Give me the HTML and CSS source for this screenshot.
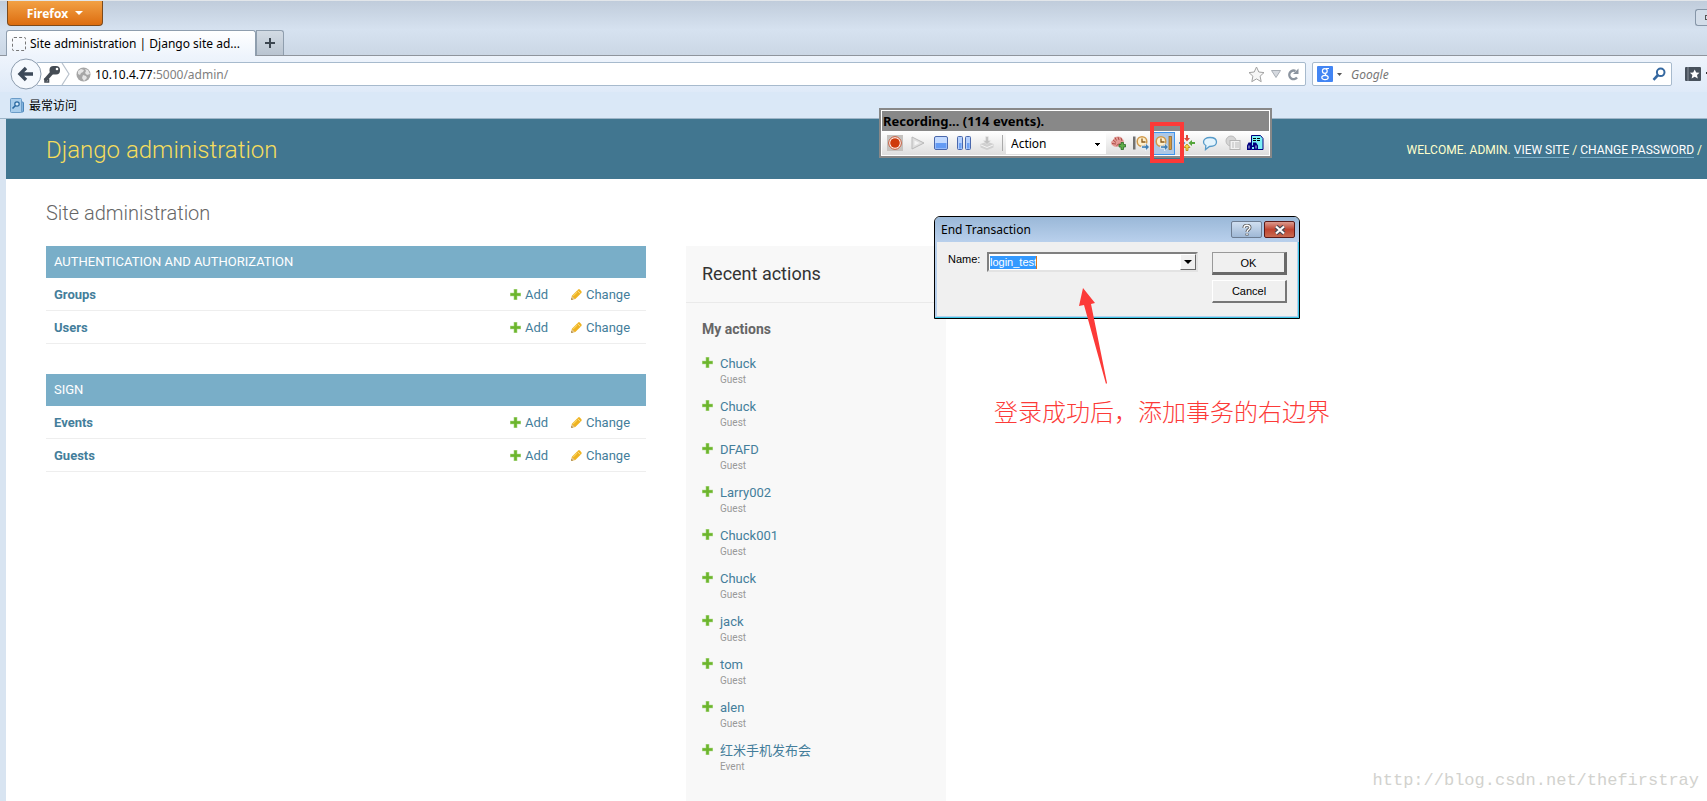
FILE: index.html
```html
<!DOCTYPE html>
<html lang="en">
<head>
<meta charset="utf-8">
<title>Site administration | Django site admin</title>
<link rel="stylesheet" href="styles.css">
</head>
<body>
<svg class="defs" aria-hidden="true">
  <symbol id="plus" viewBox="0 0 12 12"><path d="M4 0h4v4h4v4H8v4H4V8H0V4h4z" fill="#b5dc92"/><path d="M4.600 .6h2.800v4h4v2.800h-4v4H4.600v-4h-4V4.600h4z" fill="#6cb52d"/></symbol>
  <symbol id="pencil" viewBox="0 0 12 12"><path d="M.3 11.700l.7-4.400L7.500.9c.8-.7 1.700-.7 2.400 0l1.200 1.200c.7.7.7 1.600 0 2.400L4.700 11z" fill="#efb320"/><path d="M7 1.700l3.300 3.300" stroke="#f9e3a0" stroke-width="1"/><path d="M2.300 7.500L6.500 3.300" stroke="#f8d463" stroke-width="1.200"/><path d="M.3 11.700l.7-4 3.300 3.300z" fill="#e3c48c"/><path d="M.2 11.800l.4-1.900 1.500 1.500z" fill="#8a6a33"/></symbol>
  <symbol id="clock" viewBox="0 0 14 16"><circle cx="6" cy="6.500" r="4.800" fill="#fff0cc" stroke="#d09a4c" stroke-width="1.500"/><path d="M6 3.500v3.500h3.500" fill="none" stroke="#8a5a1c" stroke-width="1.300"/><path d="M5.500 10.800h4V8l4 4-4 4v-2.700h-4z" fill="#3f7fb5" stroke="#fff" stroke-width=".7"/></symbol>
</svg>

<header class="chrome">
  <div class="titlebar">
    <button class="firefox" type="button">Firefox <span class="caret"></span></button>
    <button class="maximize" type="button" aria-label="Restore window"><span></span></button>
  </div>
  <div class="tabs">
    <button class="tab" type="button"><span class="blank-icon"></span><span>Site administration | Django site ad...</span></button>
    <button class="new-tab" type="button" aria-label="New tab"><svg width="12" height="12" viewBox="0 0 12 12"><path d="M6 1v10M1 6h10" stroke="#3c4650" stroke-width="2"/></svg></button>
  </div>
  <div class="navbar">
    <button class="back" type="button" aria-label="Back"><svg width="32" height="32" viewBox="0 0 32 32"><circle cx="16" cy="16" r="15" fill="#f5f9fe" stroke="#8b9bad"/><path d="M23 16H10.500M16 10l-6 6 6 6" fill="none" stroke="#3d4a5a" stroke-width="3.400"/></svg></button>
    <div class="urlbar">
      <svg class="key" width="33" height="22" viewBox="0 0 33 22"><path d="M8 17.500l7-8" stroke="#454c54" stroke-width="3.600"/><path d="M8 15.500v3.500h3.500v-3" fill="none" stroke="#454c54" stroke-width="1.600"/><rect x="12.500" y="3" width="10.500" height="8.500" rx="4" fill="#454c54"/><circle cx="20" cy="6" r="1.300" fill="#fff"/><path d="M25 0l7 11-7 11" fill="none" stroke="#b9c2cc" stroke-width="1.200"/></svg>
      <svg class="globe" width="15" height="15" viewBox="0 0 15 15"><circle cx="7.500" cy="7.500" r="7" fill="#a6a6a6"/><path d="M2 4l3-2 3 1-1 2-2 1-1 2-2-1zM9 2l3 1 2 4-3 1-2-2 1-2zM7 8l3 1 1 2-3 3-2-3z" fill="#e4e4e4"/></svg>
      <label class="host" for="url">10.10.4.77</label><input id="url" class="path" type="text" value=":5000/admin/">
      <svg class="star" width="17" height="17" viewBox="0 0 17 17"><path d="M8.500 1l2.300 5 5.200.6-3.900 3.600 1.100 5.500-4.700-2.800-4.700 2.800 1.100-5.500L1 6.600 6.200 6z" fill="#f6f6f6" stroke="#a2a2a2"/></svg>
      <svg width="10" height="8" viewBox="0 0 10 8"><path d="M.5.500h9L5 7.500z" fill="#d5d9df" stroke="#a8aeb5"/></svg>
      <button class="bare reload" type="button" aria-label="Reload"><svg width="12" height="13" viewBox="0 0 12 13"><path d="M8.500 3A4.300 4.300 0 1 0 10 9.500" fill="none" stroke="#8b949f" stroke-width="2.400"/><path d="M11.500.500V6H6z" fill="#8b949f"/></svg></button>
    </div>
    <div class="searchbar">
      <svg width="16" height="16" viewBox="0 0 16 16"><rect width="16" height="16" rx="1" fill="#4285f4"/><circle cx="7.800" cy="5" r="2.400" fill="none" stroke="#fff" stroke-width="1.200"/><ellipse cx="8" cy="11.500" rx="3.200" ry="2.200" fill="none" stroke="#fff" stroke-width="1.200"/><path d="M9 2.500h3M8 7.500l1 2" stroke="#fff" stroke-width="1.200"/></svg>
      <svg width="5" height="3" viewBox="0 0 5 3"><path d="M0 0h5L2.500 3z" fill="#555"/></svg>
      <input class="search" type="text" placeholder="Google" aria-label="Search">
      <button class="bare" type="button" aria-label="Go"><svg width="14" height="14" viewBox="0 0 14 14"><circle cx="8.700" cy="5.300" r="3.800" fill="none" stroke="#3568a0" stroke-width="2"/><path d="M6 8l-4.500 4.800" stroke="#3568a0" stroke-width="2.600"/></svg></button>
    </div>
    <button class="bare bookmarks" type="button" aria-label="Bookmarks"><svg width="22" height="14" viewBox="0 0 22 14"><rect width="16" height="14" rx="1" fill="#48515c"/><path d="M3 0v14" stroke="#8b939c"/><path d="M9.700 2.500l1.500 3 3.300.3-2.500 2.200.8 3.400-3.100-1.700-3.100 1.700.8-3.400L4.900 5.800l3.300-.3z" fill="#fff"/><path d="M21 5h1v2h-1z" fill="#333"/></svg></button>
  </div>
  <div class="bookbar">
    <svg width="14" height="15" viewBox="0 0 14 15"><rect x="8" y="4" width="5.500" height="10" rx="1" fill="#7fb2de" stroke="#4d86ba"/><rect x=".5" y=".5" width="11" height="14" rx="1" fill="#a8cdec" stroke="#6b9cc8"/><circle cx="7" cy="6" r="2.200" fill="#d8ebfa" stroke="#27679f" stroke-width="1.200"/><path d="M5.300 7.700L2.500 10.500" stroke="#27679f" stroke-width="1.600"/></svg>
    <a href="#">最常访问</a>
  </div>
</header>

<div class="page">
  <div class="site-header">
    <a class="brand" href="#">Django administration</a>
    <div class="user-tools">WELCOME. ADMIN. <a href="#">VIEW SITE</a> / <a href="#">CHANGE PASSWORD</a> /</div>
  </div>
  <main>
    <h1>Site administration</h1>
    <div class="columns">
      <div class="apps">
        <table>
          <caption>AUTHENTICATION AND AUTHORIZATION</caption>
          <tbody>
          <tr><th scope="row"><a href="#">Groups</a></th><td class="add"><a href="#"><svg><use href="#plus"/></svg>Add</a></td><td class="change"><a href="#"><svg><use href="#pencil"/></svg>Change</a></td></tr>
          <tr><th scope="row"><a href="#">Users</a></th><td class="add"><a href="#"><svg><use href="#plus"/></svg>Add</a></td><td class="change"><a href="#"><svg><use href="#pencil"/></svg>Change</a></td></tr>
          </tbody>
        </table>
        <table>
          <caption>SIGN</caption>
          <tbody>
          <tr><th scope="row"><a href="#">Events</a></th><td class="add"><a href="#"><svg><use href="#plus"/></svg>Add</a></td><td class="change"><a href="#"><svg><use href="#pencil"/></svg>Change</a></td></tr>
          <tr><th scope="row"><a href="#">Guests</a></th><td class="add"><a href="#"><svg><use href="#plus"/></svg>Add</a></td><td class="change"><a href="#"><svg><use href="#pencil"/></svg>Change</a></td></tr>
          </tbody>
        </table>
      </div>
      <aside>
        <h2>Recent actions</h2>
        <h3>My actions</h3>
        <ul>
          <li><svg><use href="#plus"/></svg><a href="#">Chuck</a><span>Guest</span></li>
          <li><svg><use href="#plus"/></svg><a href="#">Chuck</a><span>Guest</span></li>
          <li><svg><use href="#plus"/></svg><a href="#">DFAFD</a><span>Guest</span></li>
          <li><svg><use href="#plus"/></svg><a href="#">Larry002</a><span>Guest</span></li>
          <li><svg><use href="#plus"/></svg><a href="#">Chuck001</a><span>Guest</span></li>
          <li><svg><use href="#plus"/></svg><a href="#">Chuck</a><span>Guest</span></li>
          <li><svg><use href="#plus"/></svg><a href="#">jack</a><span>Guest</span></li>
          <li><svg><use href="#plus"/></svg><a href="#">tom</a><span>Guest</span></li>
          <li><svg><use href="#plus"/></svg><a href="#">alen</a><span>Guest</span></li>
          <li><svg><use href="#plus"/></svg><a href="#">红米手机发布会</a><span>Event</span></li>
        </ul>
      </aside>
    </div>
  </main>
</div>

<section class="recorder" aria-label="Recording toolbar">
  <div class="rec-title">Recording... (114 events).</div>
  <div class="rec-tools">
    <button type="button" aria-label="Record"><svg width="16" height="16" viewBox="0 0 16 16"><rect width="16" height="16" fill="#c5c2bf"/><circle cx="8" cy="8" r="6.300" fill="#fff" stroke="#c8502c" stroke-width="1"/><circle cx="8" cy="8" r="4.800" fill="#cf3a0c"/></svg></button>
    <button type="button" aria-label="Play"><svg width="16" height="16" viewBox="0 0 16 16"><path d="M2 2l12 6-12 6z" fill="#dedede" stroke="#b9b9b9"/><path d="M4.500 5.500v5l5-2.500z" fill="#f5f5f5"/></svg></button>
    <button type="button" aria-label="Stop"><svg width="16" height="16" viewBox="0 0 16 16"><rect x="1.500" y="1.500" width="13" height="13" rx="1.500" fill="#c3daff" stroke="#4a68ac"/><path d="M2.500 8h11v5.500h-11z" fill="#649bf4"/></svg></button>
    <button type="button" aria-label="Pause"><svg width="16" height="16" viewBox="0 0 16 16"><rect x="1.500" y="1.500" width="5" height="13" rx="1" fill="#b5d0fd" stroke="#4a68ac"/><rect x="9.500" y="1.500" width="5" height="13" rx="1" fill="#b5d0fd" stroke="#4a68ac"/><path d="M3 8h2.500v5.500H3zM11 8h2.500v5.500H11z" fill="#6fa2f5"/></svg></button>
    <button type="button" aria-label="Compile"><svg width="16" height="16" viewBox="0 0 16 16"><path d="M1.500 9l6.500-2.500L14.500 9v3.500L8 15l-6.500-2.500z" fill="#d0d0d0"/><path d="M2 10l6 2.500 6-2.500" fill="none" stroke="#f4f4f4"/><path d="M6.500 1.500h3V5.500H12l-4 4-4-4h2.500z" fill="#c2c2c2" stroke="#eee" stroke-width=".5"/></svg></button>
    <span class="sep"></span>
    <select aria-label="Action"><option>Action</option></select>
    <button type="button" aria-label="Rendezvous"><svg width="16" height="16" viewBox="0 0 16 16"><path d="M1 7l2-2 2-3 3-.5 3 .5 2.500 3 .5 3-3 1.500L7 12l-3-.5L1.500 9.500z" fill="#e29a94"/><path d="M5 2.500l1.500 3M8 2l1 3M3 5l3 2.500M11 3l1 3M2 8.500l4 .5M6.500 10.500l3-2" stroke="#b04d48" stroke-width="1"/><path d="M9 9.500h2V7.500h2.500v2h2V12h-2v2.500H11V12H9z" fill="#5fae49" stroke="#2c6d29" stroke-width=".8"/></svg></button>
    <button type="button" aria-label="Start transaction"><svg width="18" height="16" viewBox="0 0 18 16"><rect x="1" y="1.500" width="2.500" height="13" fill="#727272"/><use href="#clock" x="4" width="14" height="16"/></svg></button>
    <button type="button" class="active" aria-label="End transaction"><svg width="18" height="16" viewBox="0 0 18 16"><use href="#clock" x="0" width="14" height="16"/><rect x="14" y="1.500" width="2.500" height="13" fill="#d99a3c" stroke="#8d6222" stroke-width=".7"/></svg></button>
    <button type="button" aria-label="Insert"><svg width="16" height="16" viewBox="0 0 16 16"><path d="M7 0h2v3h2L8 6.500 5 3h2z" fill="#d94a3c"/><path d="M16 7v2h-3v2L9.500 8 13 5v2z" fill="#55a63b"/><path d="M7 15.500h2v-3h2L8 9l-3 3.500h2z" fill="#f7d94b" stroke="#b0830e" stroke-width=".8"/><path d="M0 7v2h3v2L6.500 8 3 5v2z" fill="#5590cb"/></svg></button>
    <button type="button" aria-label="Comment"><svg width="16" height="16" viewBox="0 0 16 16"><path d="M8 2.500c4 0 6.500 1.800 6.500 4.500S12 11.500 7.500 11.500L3.500 14.500l.3-4C2 9.700 1.500 8.500 1.500 7 1.500 4.300 4 2.500 8 2.500z" fill="#e4f4fd" stroke="#579bc9" stroke-width="1.300"/></svg></button>
    <button type="button" aria-label="Snapshot"><svg width="16" height="16" viewBox="0 0 16 16"><circle cx="6" cy="6" r="5" fill="#d5d5d5" stroke="#bbb"/><rect x="5" y="5.500" width="10" height="9" fill="#f2f2f2" stroke="#b5b5b5"/><path d="M7 8h2M10 8h4M7 10h2M10 10h4M7 12h2M10 12h4" stroke="#bbb"/></svg></button>
    <button type="button" aria-label="Find text"><svg width="17" height="16" viewBox="0 0 17 16"><path d="M4.500 .500h9l2.500 3v11H4.500z" fill="#7df0f4" stroke="#000080"/><path d="M6 3.500h3M10 3.500h3M6 5.500h3M10 5.500h3" stroke="#000"/><path d="M0 15V10.500l1.500-3h2.500v3h2v-3h3l2 3V15H7v-3H4.500v3z" fill="#000080"/><path d="M2 10.500v3M9 10.500v3" stroke="#fff" stroke-width=".8"/></svg></button>
  </div>
</section>
<div class="highlight"></div>

<section class="dialog" role="dialog" aria-labelledby="dlg-title">
  <div class="dlg-bar">
    <span id="dlg-title">End Transaction</span>
    <button class="help" type="button" aria-label="Help"><svg width="10" height="12" viewBox="0 0 10 12"><path d="M2 4c0-3.500 6-3.500 6-.5C8 5.500 5 5.500 5 8M5 9.500v2" fill="none" stroke="#555" stroke-width="3"/><path d="M2 4c0-3.500 6-3.500 6-.5C8 5.500 5 5.500 5 8M5 9.500v1.500" fill="none" stroke="#fff" stroke-width="1.400"/></svg></button>
    <button class="close" type="button" aria-label="Close"><svg width="12" height="10" viewBox="0 0 12 10"><path d="M2 1.500l8 7M10 1.500l-8 7" stroke="#4a4a55" stroke-width="4.400"/><path d="M2 1.500l8 7M10 1.500l-8 7" stroke="#fff" stroke-width="2.200"/></svg></button>
  </div>
  <div class="dlg-body">
    <label for="name">Name:</label>
    <div class="combo"><input id="name" type="text" value="login_test"><button type="button" aria-label="Show names"><svg width="8" height="4" viewBox="0 0 8 4"><path d="M0 0h8L4 4z"/></svg></button></div>
    <div class="dlg-actions"><button class="ok" type="button">OK</button><button type="button">Cancel</button></div>
  </div>
</section>

<svg class="arrow" width="30" height="98" viewBox="0 0 30 98" aria-hidden="true"><path d="M5 0l12 15-4 1 16 79-1 1L6 17l-5 1z" fill="#fc3a38"/></svg>
<p class="note">登录成功后，添加事务的右边界</p>
<p class="watermark">http://blog.csdn.net/thefirstray</p>
</body>
</html>
```

FILE: styles.css
```css
* { box-sizing: border-box; }
body {
  margin: 0;
  min-height: 100vh;
  display: flex;
  flex-direction: column;
  position: relative;
  overflow-x: hidden;
  background: #d8e4f1;
  font-family: Roboto, "Noto Sans CJK SC", sans-serif;
  font-size: 13px;
}
button, input, select { font: inherit; color: inherit; margin: 0; padding: 0; border: 0; outline: 0; background: none; }
a { color: #447e9b; text-decoration: none; }
svg { display: block; flex: none; }
.defs { position: absolute; width: 0; height: 0; }

/* Browser window */
.chrome {
  font-family: "Noto Sans", "Noto Sans CJK SC", sans-serif;
  font-size: 12px;
  border-bottom: 1px solid #9db5c8;
  background: #dae8f7;
}
.titlebar {
  display: flex;
  justify-content: space-between;
  height: 30px;
  padding-left: 7px;
  border-top: 1px solid #e2e6ea;
  background: linear-gradient(#c0ccdb, #d6e2f0);
}
.firefox {
  width: 96px;
  height: 25px;
  display: flex;
  align-items: center;
  justify-content: center;
  gap: 7px;
  color: #fff;
  font-weight: bold;
  border: 1px solid #7c4a1c;
  border-top: 0;
  border-radius: 0 0 4px 4px;
  background: linear-gradient(#f2a145, #dd6d10);
}
.caret { border: 4px solid transparent; border-top-color: #fff; border-bottom: 0; }
.maximize {
  width: 12px;
  height: 17px;
  margin-top: 8px;
  display: flex;
  align-items: center;
  justify-content: flex-end;
  border: 1px solid #8696a8;
  border-right: 0;
  border-radius: 3px 0 0 3px;
  background: #d3dde9;
}
.maximize span { width: 2px; height: 5px; border: 1px solid #555; border-right: 0; }
.tabs {
  display: flex;
  align-items: flex-end;
  height: 26px;
  padding-left: 6px;
  border-bottom: 1px solid #8f959d;
  background: linear-gradient(#d6e2f0, #cbd7e5);
}
.tab {
  width: 250px;
  height: 26px;
  margin-bottom: -1px;
  padding: 0 5px;
  display: flex;
  align-items: center;
  gap: 4px;
  white-space: nowrap;
  text-align: left;
  border: 1px solid #8f9eae;
  border-bottom: 0;
  border-radius: 3px 3px 0 0;
  background: linear-gradient(#fff, #eef4fc);
}
.blank-icon { width: 14px; height: 14px; flex: none; border: 1px dashed #777; border-radius: 2px; }
.new-tab {
  width: 28px;
  height: 25px;
  display: grid;
  place-items: center;
  border: 1px solid #8f9eae;
  border-bottom: 0;
  border-radius: 0 3px 0 0;
  background: linear-gradient(#d3dbe4, #b9c4d0);
}
.navbar {
  display: flex;
  align-items: center;
  height: 36px;
  padding-left: 10px;
  background: linear-gradient(#eef4fc, #dfeaf8);
}
.back { flex: none; z-index: 1; }
.urlbar, .searchbar {
  display: flex;
  align-items: center;
  height: 24px;
  border: 1px solid #a7bacd;
  border-radius: 2px;
  background: #fff;
}
.urlbar { flex: 1; margin-left: -6px; margin-right: 6px; padding-right: 6px; }
.globe { margin: 0 4px 0 6px; }
.path { flex: 1; min-width: 0; color: #808080; }
.star { margin-right: 6px; }
.reload { margin-left: 6px; }
.searchbar { width: 360px; padding: 0 5px 0 4px; gap: 4px; }
.search { flex: 1; min-width: 0; padding-left: 5px; font-style: italic; }
.search::placeholder { color: #777; opacity: 1; }
.bookmarks { margin-left: 13px; }
.bookbar { display: flex; align-items: center; gap: 5px; height: 26px; padding-left: 10px; }
.bookbar a { color: #000; }

/* Admin page */
.page { flex: 1; display: flex; flex-direction: column; margin-left: 6px; background: #fff; }
.site-header {
  display: flex;
  align-items: center;
  justify-content: space-between;
  height: 60px;
  padding: 2px 5px 0 40px;
  background: #417690;
}
.brand { color: #f5dd5d; font-size: 24px; font-weight: 300; line-height: 28px; }
.user-tools { color: #ffc; font-size: 12px; white-space: nowrap; }
.user-tools a { color: #fff; border-bottom: 1px solid #79aec8; }
main { flex: 1; display: flex; flex-direction: column; padding: 20px 40px 0; }
h1 { margin: 0 0 19px; color: #666; font-size: 20px; font-weight: 300; line-height: 28px; }
.columns { flex: 1; display: flex; gap: 40px; }
.apps { width: 600px; }
table { width: 100%; margin-bottom: 30px; border-spacing: 0; }
caption { height: 32px; padding: 0 8px; color: #fff; background: #79aec8; font-size: 13px; line-height: 32px; text-align: left; }
th, td { height: 33px; padding: 0 8px; text-align: left; border-bottom: 1px solid #eee; }
.add { width: 61px; }
.change { width: 83px; }
td a { display: flex; align-items: center; gap: 4px; }
td svg, li svg { width: 11px; height: 11px; }
aside { width: 260px; padding-bottom: 16px; background: #f8f8f8; }
h2 { margin: 0; padding: 16px; color: #333; font-size: 18px; font-weight: 400; line-height: 24px; border-bottom: 1px solid #eaeaea; }
h3 { margin: 16px 16px 15px; color: #666; font-size: 14px; line-height: 20px; }
ul { margin: 0; padding: 0 16px; list-style: none; }
li { display: grid; grid-template-columns: 18px 1fr; height: 43px; grid-template-rows: 20px 12px; align-content: start; }
li svg { margin-top: 3px; }
li a { white-space: nowrap; line-height: 20px; }
li span { grid-column: 2; color: #999; font-size: 10px; line-height: 12px; }

/* Recorder window */
.recorder {
  position: absolute;
  left: 879px;
  top: 108px;
  width: 393px;
  border: 2px solid #888;
  background: #fff;
  padding: 1px;
  font-family: "Noto Sans", sans-serif;
  font-size: 12px;
}
.rec-title { height: 20px; padding-left: 1px; font-weight: bold; font-size: 13px; line-height: 20px; background: #888; }
.rec-tools { display: flex; align-items: center; height: 24px; padding-left: 1px; background: linear-gradient(#fff, #dedede); }
.rec-tools button { width: 23px; height: 23px; display: grid; place-items: center; }
.rec-tools .active { border: 1px solid #3f94ec; background: #adc8e6; }
.sep { width: 1px; height: 16px; margin: 0 3px 0 4px; background: #aaa; }
select {
  appearance: none;
  width: 100px;
  height: 21px;
  padding-left: 5px;
  background-color: #fff;
  background-image: linear-gradient(#000, #000), linear-gradient(#000, #000), linear-gradient(#000, #000);
  background-repeat: no-repeat;
  background-size: 5px 1px, 3px 1px, 1px 1px;
  background-position: right 6px top 10px, right 7px top 11px, right 8px top 12px;
}
.highlight { position: absolute; left: 1150px; top: 122px; width: 34px; height: 41px; border: 4px solid #fc3a38; }

/* Transaction dialog */
.dialog {
  position: absolute;
  left: 934px;
  top: 216px;
  width: 366px;
  border: 1px solid #000;
  border-radius: 6px 6px 0 0;
  background: #f0f0f0;
  box-shadow: inset -1px -1px #3cc8e8, inset 2px 0 #b8d0ec, inset -2px -2px #b8d0ec;
  color: #000;
  font-family: "Liberation Sans", sans-serif;
  font-size: 12px;
}
.dlg-bar {
  display: flex;
  align-items: center;
  gap: 2px;
  height: 25px;
  padding: 0 4px 0 6px;
  border-radius: 5px 5px 0 0;
  font-family: "Noto Sans", sans-serif;
  background: linear-gradient(#9ab8d8, #b9d0ec);
}
#dlg-title { flex: 1; }
.dlg-bar button { width: 31px; height: 17px; display: grid; place-items: center; border: 1px solid #6d7d92; border-radius: 2px; background: linear-gradient(#d0dff0, #9fb8d6); }
.dlg-bar .close { border-color: #5c1b18; background: linear-gradient(#dc9c90, #bf4430 50%, #c96a50); }
.dlg-body { display: flex; align-items: flex-start; padding: 10px 12px 15px 13px; font-size: 11px; }
.dlg-body label { width: 39px; line-height: 14px; }
.combo {
  flex: 1;
  display: flex;
  align-items: center;
  height: 20px;
  margin-right: 14px;
  padding: 0 0 0 1px;
  background: #fff;
  border: 2px solid #808080;
  border-right-color: #e3e3e3;
  border-bottom-color: #e3e3e3;
}
.combo input { width: 47px; height: 13px; color: #fff; background: #3399ff; border-right: 1px solid #d9741c; }
.combo button { width: 16px; height: 16px; margin-left: auto; display: grid; place-items: center; background: #f0f0f0; border: 1px solid #fff; border-right-color: #696969; border-bottom-color: #696969; }
.dlg-actions { display: flex; flex-direction: column; gap: 5px; width: 75px; }
.dlg-actions button { height: 23px; background: #f0f0f0; border: 1px solid #fff; border-right: 2px solid #777; border-bottom: 2px solid #777; }
.dlg-actions .ok { border-right-width: 3px; border-bottom-width: 3px; border-color: #999 #696969 #696969 #999; }

/* Annotations */
.arrow { position: absolute; left: 1078px; top: 288px; }
.note { position: absolute; left: 994px; top: 393px; margin: 0; color: #fc3a38; font-family: "Noto Sans CJK SC", sans-serif; font-size: 24px; font-weight: 300; line-height: 36px; white-space: nowrap; }
.watermark { position: absolute; right: 8px; bottom: 8px; margin: 0; color: #d2d2ce; font-family: "Liberation Mono", monospace; font-size: 17px; line-height: 24px; }
```
